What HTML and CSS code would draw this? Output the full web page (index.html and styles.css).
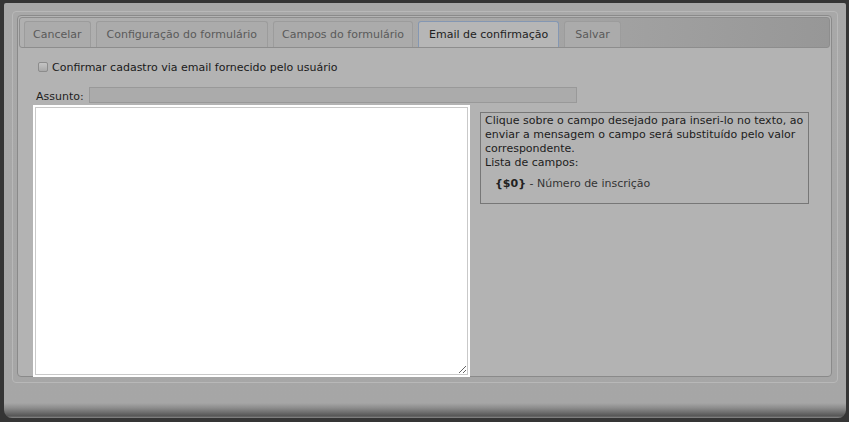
FILE: index.html
```html
<!DOCTYPE html>
<html lang="pt-BR">
<head>
    <meta charset="UTF-8">
    <title>Email de confirmação</title>
    <link rel="stylesheet" href="styles.css">
</head>
<body>
    <div class="dialog">
        <div class="dialog-content">
            <div class="tabs-panel">
                <div class="tab-bar">
                    <div class="tab narrow">Cancelar</div>
                    <div class="tab">Configuração do formulário</div>
                    <div class="tab narrow">Campos do formulário</div>
                    <div class="tab active">Email de confirmação</div>
                    <div class="tab">Salvar</div>
                </div>

                <div class="tab-body">
                    <label class="confirm-row">
                        <span class="checkbox"></span>
                        Confirmar cadastro via email fornecido pelo usuário
                    </label>

                    <div class="subject-row">
                        <span class="subject-label">Assunto:</span>
                        <input class="subject-input" type="text">
                    </div>

                    <div class="editor-row">
                        <div class="editor-wrap">
                            <textarea class="editor"></textarea>
                        </div>
                        <div class="help-box">
                            Clique sobre o campo desejado para inseri-lo no texto, ao enviar a mensagem o campo será substituído pelo valor correspondente.<br>
                            Lista de campos:
                            <div class="field-item"><b>{$0}</b> - Número de inscrição</div>
                        </div>
                    </div>
                </div>
            </div>
        </div>
        <div class="dialog-footer"></div>
    </div>
</body>
</html>
```

FILE: styles.css
```css
body {
    margin: 0;
    background-color: #353535;
    font-family: "DejaVu Sans", Verdana, sans-serif;
    font-size: 11px;
    color: #1e1e1e;
}

.dialog {
    box-sizing: border-box;
    height: 415px;
    margin: 3px 3px 0 4px;
    padding: 8px 8px 0 8px;
    border-radius: 2px 2px 8px 8px;
    background: linear-gradient(to bottom, #a8a8a8 0, #a6a6a6 400px, #8c8c8c 405px, #5c5c5c 412px, #555 413px, #8a8a8a 415px);
    display: flex;
    flex-direction: column;
}

.dialog-content {
    border: 1px solid #b8b8b8;
    border-radius: 4px;
    padding: 3px 5px 5px 4px;
}

.tabs-panel {
    box-sizing: border-box;
    height: 362px;
    padding: 1px;
    border: 1px solid #8a8a8a;
    border-radius: 4px;
    background-color: #b3b3b3;
    display: flex;
    flex-direction: column;
}

.tab-bar {
    box-sizing: border-box;
    height: 31px;
    padding: 3px 0 0 4px;
    border: 1px solid #8d8d8d;
    border-radius: 3px;
    background: linear-gradient(to right, #b0b0b0 0%, #a7a7a7 60%, #979797 100%);
    display: flex;
    align-items: flex-end;
    gap: 5px;
}

.tab {
    box-sizing: border-box;
    height: 26px;
    padding: 0 10px;
    line-height: 25px;
    border: 1px solid #9c9c9c;
    border-bottom: none;
    border-radius: 3px 3px 0 0;
    background-color: #ababab;
    color: #5a5a5a;
    white-space: nowrap;
}

.tab.narrow {
    padding: 0 8px;
}

.tab.active {
    border: 1px solid #8497b3;
    border-bottom: none;
    background-color: #b6b6b6;
    color: #222;
}

.tab-body {
    padding: 0 0 0 14px;
}

.confirm-row {
    display: flex;
    align-items: center;
    height: 16px;
    margin: 11px 0 0 5px;
    color: #1a1a1a;
}

.checkbox {
    box-sizing: border-box;
    width: 10px;
    height: 10px;
    margin-right: 4px;
    border: 1px solid #8c8c8c;
    border-radius: 2px;
    background: linear-gradient(to bottom, #c4c4c4, #a9a9a9);
}

.subject-row {
    display: flex;
    align-items: center;
    margin: 12px 0 0 3px;
}

.subject-label {
    width: 53px;
    padding-top: 2px;
}

.subject-input {
    box-sizing: border-box;
    width: 488px;
    height: 16px;
    margin: 0;
    padding: 0 3px;
    border: 1px solid #999;
    background-color: #ababab;
}

.editor-row {
    display: flex;
    align-items: flex-start;
    margin-top: 2px;
}

.editor-wrap {
    box-sizing: border-box;
    width: 437px;
    height: 272px;
    padding: 2px;
    background-color: #fff;
}

.editor {
    box-sizing: border-box;
    display: block;
    width: 100%;
    height: 100%;
    margin: 0;
    border: 1px solid #c9c9c9;
    background-color: #fff;
}

.help-box {
    box-sizing: border-box;
    width: 329px;
    height: 92px;
    margin: 7px 0 0 10px;
    padding: 1px 4px 0 4px;
    border: 1px solid #777;
    line-height: 14px;
    color: #1c1c1c;
}

.field-item {
    margin: 7px 0 0 10px;
    color: #333;
}

.field-item b {
    color: #222;
}

.dialog-footer {
    flex: 1;
}
```
